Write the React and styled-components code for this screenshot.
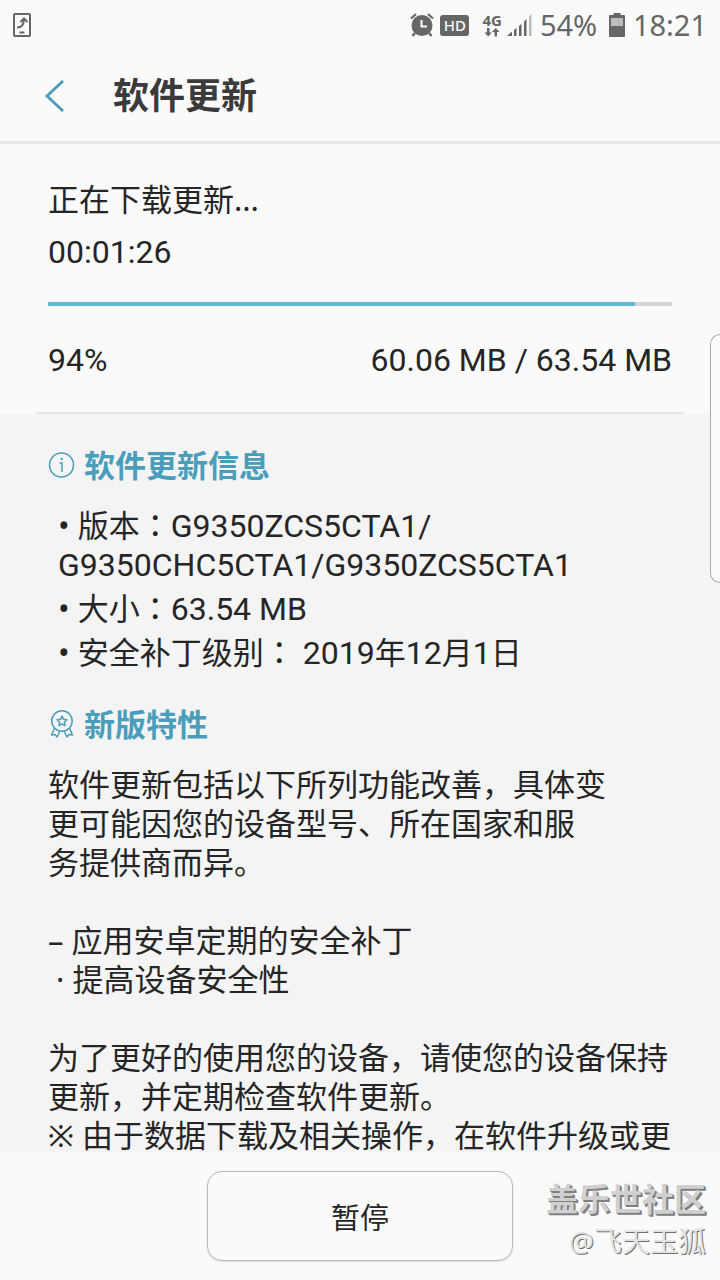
import React, {useState} from "react";
import styled, {createGlobalStyle} from "styled-components";

const GlobalStyle = createGlobalStyle`
  * {
    box-sizing: border-box;
  }

  body {
    margin: 0;
    background-color: #fafafa;
    color: #252525;
    font-family: "Noto Sans", "Noto Sans CJK SC", sans-serif;
  }

  h1, h2, p, ul {
    margin: 0;
    padding: 0;
  }
`;

const Layout = styled.div`
  position: relative;
  display: flex;
  flex-direction: column;
  height: 100vh;
  overflow: hidden;
  font-size: 31px;
`;

const StatusBar = styled.div`
  display: flex;
  align-items: center;
  flex: none;
  height: 50px;
  padding: 0 13px 0 12px;
  color: #666;

  svg {
    display: block;
  }
`;

const StatusGroup = styled.div`
  display: flex;
  align-items: center;
  margin-left: auto;
`;

const HdBadge = styled.span`
  width: 29px;
  margin: 0 13px 0 6px;
  border-radius: 3px;
  background-color: #666;
  color: #fafafa;
  font-size: 15px;
  font-weight: 500;
  line-height: 21px;
  text-align: center;
`;

const Network = styled.div`
  display: flex;
  flex-direction: column;
  align-items: center;
  margin-right: 5px;
  font-size: 15px;
  font-weight: bold;
  line-height: 15px;
`;

const StatusText = styled.span`
  min-width: 61px;
  margin: 0 8px;
  font-size: 29px;
  line-height: 40px;

  &:last-child {
    margin-right: 0;
  }
`;

const Header = styled.header`
  display: flex;
  align-items: center;
  flex: none;
  gap: 39px;
  height: 94px;
  padding: 0 36px;
  border-bottom: 3px solid #e6e6e6;
`;

const BackButton = styled.button`
  padding: 0 8px;
  border: none;
  background: none;
  cursor: pointer;

  svg {
    display: block;
  }
`;

const PageTitle = styled.h1`
  color: #3a3a3a;
  font-size: 36px;
  line-height: 52px;
`;

const Download = styled.section`
  flex: none;
  padding: 29px 48px 26px;
  line-height: 52px;
`;

const Latin = styled.span`
  font-family: Roboto, sans-serif;
  font-size: 32px;
  line-height: 1;
`;

const Track = styled.div`
  height: 4px;
  margin: 25px 0 28px;
  background-color: #d4d4d4;
`;

const Fill = styled.div`
  height: 100%;
  background-color: #60bbd9;
`;

const Stats = styled.p`
  display: flex;
  align-items: center;
  justify-content: space-between;
  height: 52px;
`;

const Divider = styled.hr`
  flex: none;
  width: auto;
  height: 2px;
  margin: 0 36px;
  border: none;
  background-color: #e4e4e4;
`;

const Details = styled.main`
  flex: 1;
  min-height: 0;
  padding: 31px 48px 0;
  overflow-y: auto;
  scrollbar-width: none;
  background-color: #f4f4f4;
  line-height: 39px;
`;

const SectionTitle = styled.h2`
  display: flex;
  align-items: center;
  gap: 9px;
  height: 40px;
  margin-bottom: 21px;
  color: #4a9ebb;
  font-size: 31px;
  line-height: 40px;
`;

const InfoList = styled.ul`
  display: flex;
  flex-direction: column;
  gap: 5px;
  margin-bottom: 32px;
  padding-left: 10px;
  list-style: none;
`;

const InfoItem = styled.li`
  white-space: pre-wrap;
`;

/* full-width colon, centred in its cell */
const Colon = styled.span`
  font-family: "Noto Sans CJK TC", sans-serif;
  line-height: 1;
`;

const Notes = styled.p`
  white-space: pre;
`;

const Footer = styled.footer`
  display: flex;
  justify-content: center;
  flex: none;
  padding: 19px 0;
`;

const PauseButton = styled.button`
  width: 306px;
  height: 90px;
  border: 1px solid #b9b9b9;
  border-radius: 15px;
  background-color: #fafafa;
  box-shadow: 0 1px 2px #ddd;
  color: #252525;
  font-family: inherit;
  font-size: 29px;
  cursor: pointer;
`;

const EdgeHandle = styled.div`
  position: absolute;
  top: 334px;
  right: 0;
  width: 10px;
  height: 249px;
  border: 1px solid #a9a9a9;
  border-right: none;
  border-radius: 12px 0 0 12px;
  background-color: #fcfcfc;
`;

const Watermark = styled.div`
  position: absolute;
  right: 14px;
  bottom: 18px;
  display: flex;
  flex-direction: column;
  align-items: flex-end;
  pointer-events: none;
`;

const Community = styled.span`
  color: #d0d0d0;
  font-size: 32px;
  font-weight: bold;
  line-height: 42px;
  text-shadow: 1px 1px 0 #808080, 2px 2px 0 #808080;
`;

const Author = styled.span`
  color: #e4e4e4;
  font-size: 28px;
  line-height: 42px;
  text-shadow: 1px 1px 0 #707070;
`;

const info = [
    {label: "版本", value: <><Latin>G9350ZCS5CTA1/</Latin><br /><Latin>G9350CHC5CTA1/G9350ZCS5CTA1</Latin></>},
    {label: "大小", value: <Latin>63.54 MB</Latin>},
    {label: "安全补丁级别", value: <> <Latin>2019</Latin>年<Latin>12</Latin>月<Latin>1</Latin>日</>},
];

const notes = `软件更新包括以下所列功能改善，具体变
更可能因您的设备型号、所在国家和服
务提供商而异。

– 应用安卓定期的安全补丁
 · 提高设备安全性

为了更好的使用您的设备，请使您的设备保持
更新，并定期检查软件更新。
※ 由于数据下载及相关操作，在软件升级或更`;

function UpdateIcon() {
    return (
        <svg width="20" height="26" viewBox="0 0 20 26" fill="none" stroke="#666" strokeWidth="2">
            <rect x="2" y="2" width="16" height="22" rx="1" />
            <path d="M5 15.500C9.500 15.500 12 13 12 7" />
            <path d="M8.500 10L12 6.500L15.500 10" />
            <path d="M7.500 20.500H12.500" />
        </svg>
    )
}

function AlarmIcon() {
    return (
        <svg width="24" height="24" viewBox="0 0 24 24" fill="none" stroke="#666">
            <circle cx="12" cy="12.500" r="10.500" fill="#666" stroke="none" />
            <path d="M1 5.500L6 1M23 5.500L18 1" strokeWidth="2.200" />
            <path d="M5 20L2.500 23M19 20L21.500 23" strokeWidth="2.500" />
            <path d="M11.500 7V13.500H17" stroke="#fafafa" strokeWidth="2" />
        </svg>
    )
}

function DataArrows() {
    return (
        <svg width="16" height="9" viewBox="0 0 16 9" fill="#666">
            <path d="M3 0H5.500V4.500H8L4.250 8.500L.5 4.500H3Z" />
            <path d="M10.500 8.500H13V4H15.500L11.750 0L8 4H10.500Z" />
        </svg>
    )
}

function SignalIcon() {
    return (
        <svg width="25" height="22" viewBox="0 0 25 22" fill="#666">
            <path d="M0 22L5 17.500V22Z" />
            <path d="M7 16L9.500 13.800V22H7Z" />
            <path d="M12 12L14.500 9.700V22H12Z" />
            <path d="M17 7.500L19.500 5V22H17Z" />
            <path d="M22 2.500L24.500 0V22H22Z" fill="#bcbcbc" />
        </svg>
    )
}

function BatteryIcon() {
    return (
        <svg width="16" height="24" viewBox="0 0 16 24" fill="#666">
            <path d="M4.500 0H11.500V2H15Q16 2 16 3V23Q16 24 15 24H1Q0 24 0 23V3Q0 2 1 2H4.500Z" />
            <rect x="2" y="5" width="12" height="8" fill="#bcbcbc" />
        </svg>
    )
}

function InfoIcon() {
    return (
        <svg width="27" height="27" viewBox="0 0 27 27" fill="none" stroke="#4a9ebb" strokeWidth="1.500">
            <circle cx="13.500" cy="13" r="12" />
            <path d="M11.500 11H14V20" />
            <circle cx="13.700" cy="7" r="1.200" fill="#4a9ebb" stroke="none" />
        </svg>
    )
}

function AwardIcon() {
    return (
        <svg width="27" height="28" viewBox="0 0 27 28" fill="none" stroke="#4a9ebb" strokeWidth="1.500" strokeLinejoin="round">
            <circle cx="14" cy="11" r="10.200" />
            <path d="M14 6.200L15.500 9.300L18.900 9.700L16.400 12.100L17 15.500L14 13.800L11 15.500L11.600 12.100L9.100 9.700L12.500 9.300Z" />
            <path d="M6.500 18L3.500 25L7 24.500L9 27L12 21" />
            <path d="M21.500 18L24.500 25L21 24.500L19 27L16 21" />
        </svg>
    )
}

function App() {
    const [paused, setPaused] = useState(false);
    const percent = 94;
    return (
        <Layout lang="zh-CN">
            <GlobalStyle />
            <StatusBar>
                <UpdateIcon />
                <StatusGroup>
                    <AlarmIcon />
                    <HdBadge>HD</HdBadge>
                    <Network>
                        4G
                        <DataArrows />
                    </Network>
                    <SignalIcon />
                    <StatusText>54%</StatusText>
                    <BatteryIcon />
                    <StatusText>18:21</StatusText>
                </StatusGroup>
            </StatusBar>

            <Header>
                <BackButton aria-label="返回">
                    <svg width="22" height="34" viewBox="0 0 22 34" fill="none" stroke="#4a9ebb" strokeWidth="2.800">
                        <path d="M19 2L3 17L19 32" />
                    </svg>
                </BackButton>
                <PageTitle>软件更新</PageTitle>
            </Header>

            <Download>
                <p>正在下载更新...</p>
                <p><Latin>00:01:26</Latin></p>
                <Track role="progressbar" aria-label="正在下载更新" aria-valuenow={percent} aria-valuemin={0} aria-valuemax={100}>
                    <Fill style={{width: `${percent}%`}} />
                </Track>
                <Stats>
                    <Latin>{percent}%</Latin>
                    <Latin>60.06 MB / 63.54 MB</Latin>
                </Stats>
            </Download>
            <Divider />

            <Details>
                <SectionTitle><InfoIcon />软件更新信息</SectionTitle>
                <InfoList>
                    {info.map(item => (
                        <InfoItem key={item.label}>
                            • {item.label}<Colon lang="zh-TW">：</Colon>{item.value}
                        </InfoItem>
                    ))}
                </InfoList>
                <SectionTitle><AwardIcon />新版特性</SectionTitle>
                <Notes>{notes}</Notes>
            </Details>

            <Footer>
                <PauseButton onClick={() => {setPaused(!paused);}}>{paused ? "继续" : "暂停"}</PauseButton>
            </Footer>

            <EdgeHandle />
            <Watermark>
                <Community>盖乐世社区</Community>
                <Author>@飞天玉狐</Author>
            </Watermark>
        </Layout>
    )
}

export default App;
